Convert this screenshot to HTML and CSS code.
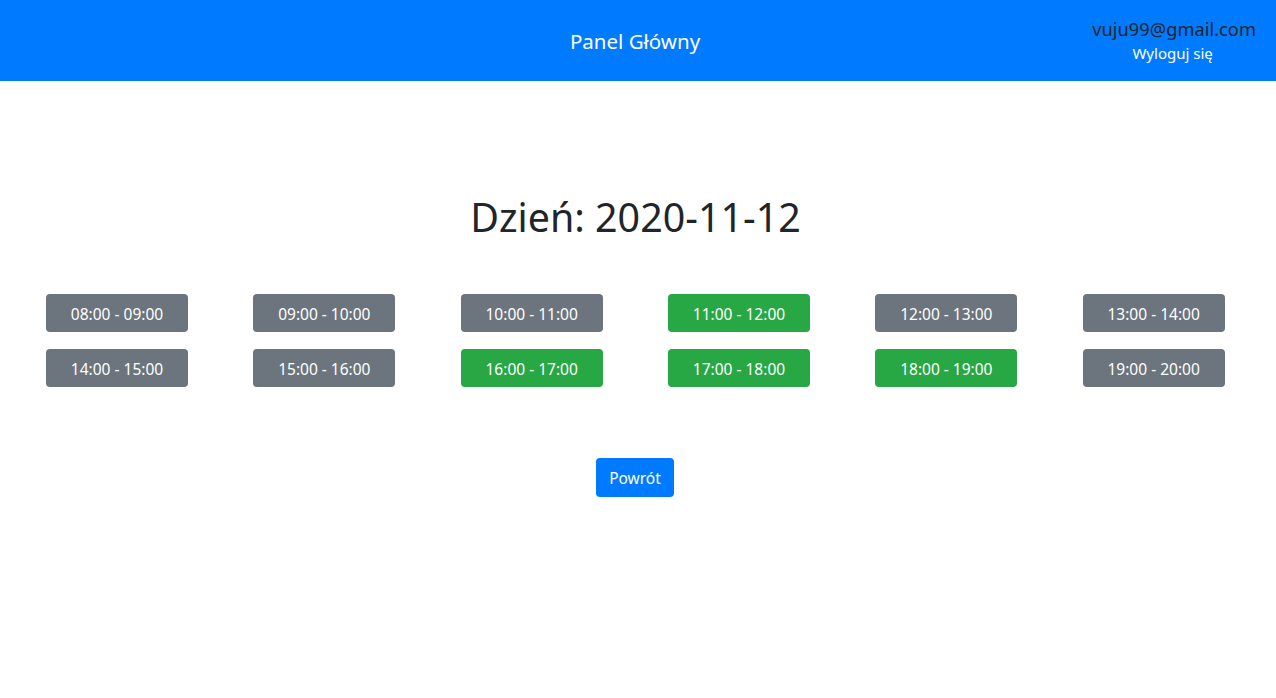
FILE: index.html
```html
<!DOCTYPE html>
<html lang="pl">
<head>
<meta charset="utf-8">
<title>Panel Główny</title>
<link rel="stylesheet" href="styles.css">
</head>
<body>
<header class="topbar">
  <div class="topbar-side"></div>
  <div class="topbar-title">Panel Główny</div>
  <div class="topbar-user">
    <div class="user-email">vuju99@gmail.com</div>
    <a class="user-logout" href="#">Wyloguj się</a>
  </div>
</header>
<main class="content">
  <h1 class="day-title">Dzień: 2020-11-12</h1>
  <div class="slots">
    <button class="slot slot-busy">08:00 - 09:00</button>
    <button class="slot slot-busy">09:00 - 10:00</button>
    <button class="slot slot-busy">10:00 - 11:00</button>
    <button class="slot slot-free">11:00 - 12:00</button>
    <button class="slot slot-busy">12:00 - 13:00</button>
    <button class="slot slot-busy">13:00 - 14:00</button>
    <button class="slot slot-busy">14:00 - 15:00</button>
    <button class="slot slot-busy">15:00 - 16:00</button>
    <button class="slot slot-free">16:00 - 17:00</button>
    <button class="slot slot-free">17:00 - 18:00</button>
    <button class="slot slot-free">18:00 - 19:00</button>
    <button class="slot slot-busy">19:00 - 20:00</button>
  </div>
  <div class="back-wrap">
    <button class="back-btn">Powrót</button>
  </div>
</main>
</body>
</html>
```
FILE: styles.css
```css
* { box-sizing: border-box; }
html, body { margin: 0; padding: 0; }
body {
  font-family: "Noto Sans", "Open Sans", sans-serif;
  color: #212529;
  background: #fff;
  width: 1276px;
  height: 698px;
  overflow: hidden;
}
.topbar {
  height: 81px;
  background: #007bff;
  display: grid;
  grid-template-columns: 1fr auto 1fr;
  align-items: center;
}
.topbar-title {
  color: #fff;
  font-size: 20.5px;
  line-height: 24px;
  margin-right: 6px;
}
.topbar-user {
  justify-self: end;
  padding-right: 20px;
  text-align: center;
  display: flex;
  flex-direction: column;
  align-items: center;
  margin-top: -1px;
}
.user-email {
  font-size: 18.3px;
  line-height: 22px;
  color: #212529;
}
.user-logout {
  color: #fff;
  font-size: 15px;
  line-height: 20px;
  text-decoration: none;
  margin-top: 3px;
  margin-right: 3px;
}
.content {
  padding-top: 112px;
}
.day-title {
  margin: 0;
  padding-right: 5px;
  text-align: center;
  font-weight: 400;
  font-size: 39.4px;
  line-height: 48px;
}
.slots {
  margin-top: 53px;
  padding-left: 46px;
  display: grid;
  grid-template-columns: repeat(6, 142px);
  column-gap: 65.33px;
  row-gap: 17px;
}
.slot, .back-btn {
  font-family: inherit;
  font-size: 15.5px;
  border: none;
  border-radius: 4px;
  color: #fff;
  padding: 1px 0 0;
  cursor: pointer;
}
.slot {
  height: 38px;
  width: 142px;
}
.slot-busy { background: #6c757d; }
.slot-free { background: #28a745; }
.back-wrap {
  margin-top: 71px;
  display: flex;
  justify-content: center;
  padding-right: 6px;
}
.back-btn {
  background: #007bff;
  height: 39px;
  width: 78px;
}
```
